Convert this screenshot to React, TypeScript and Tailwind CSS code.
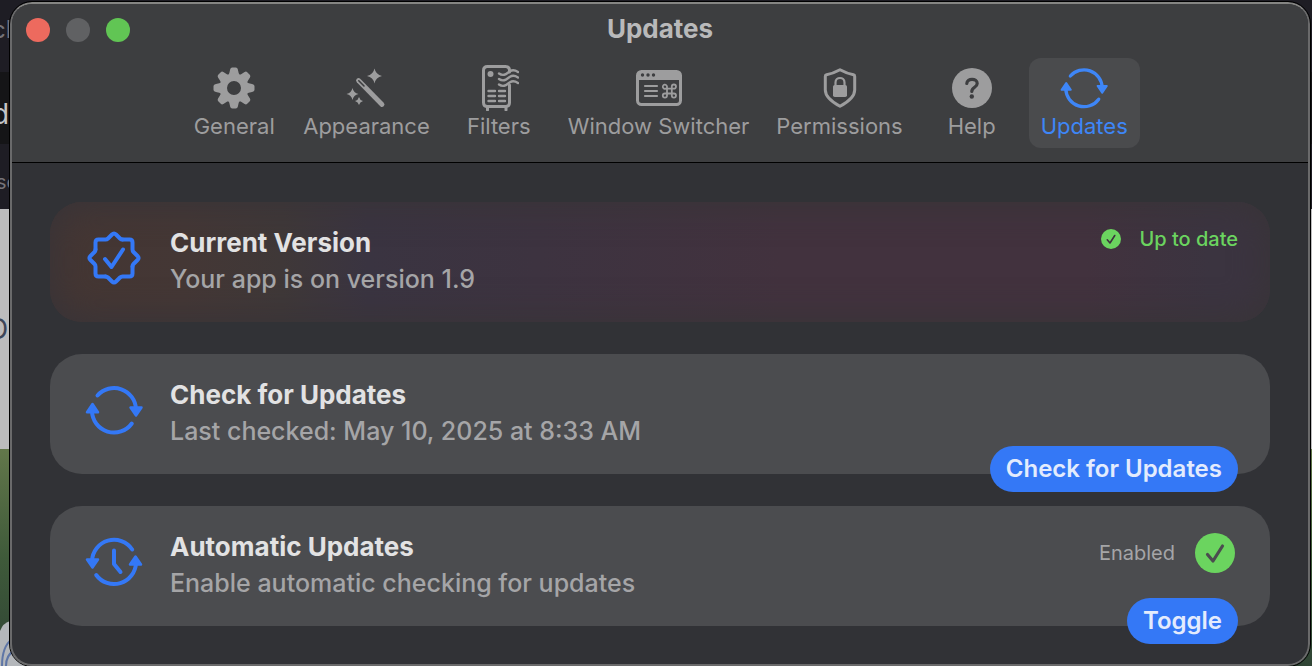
import React, { useState } from 'react';

type TabId =
  | 'general'
  | 'appearance'
  | 'filters'
  | 'switcher'
  | 'permissions'
  | 'help'
  | 'updates';

interface CardProps {
  icon: React.ReactNode;
  title: string;
  subtitle: string;
  className: string;
  children?: React.ReactNode;
}

const GearIcon: React.FC = () => (
  <svg width="42" height="42" viewBox="-21 -21 42 42" fill="currentColor">
    {[0, 45, 90, 135, 180, 225, 270, 315].map(angle => (
      <path
        key={angle}
        transform={`rotate(${angle})`}
        d="M-5.5 -13 Q-4.600 -14.500 -4.200 -17 L-3.800 -18.800 Q-3.400 -20.500 -1.8 -20.500 H1.8 Q3.400 -20.500 3.800 -18.800 L4.200 -17 Q4.600 -14.500 5.5 -13 Z"
      />
    ))}
    <circle r="10.700" fill="none" stroke="currentColor" strokeWidth="7.400" />
  </svg>
);

const WandIcon: React.FC = () => (
  <svg width="42" height="42" viewBox="0 0 42 42" fill="currentColor">
    <path d="M13.5 13.5 L37 37.5" stroke="currentColor" strokeWidth="4.800" strokeLinecap="round" />
    <path d="M13.8 13.8 L19 19" stroke="#3d3e40" strokeWidth="1.600" strokeLinecap="round" />
    <path d="M29.5 1.500 Q30.800 7.700 37 9 Q30.800 10.300 29.500 16.500 Q28.200 10.300 22 9 Q28.200 7.700 29.500 1.500 Z" />
    <path d="M7.500 21 Q8.600 25.900 13.500 27 Q8.600 28.100 7.500 33 Q6.400 28.100 1.500 27 Q6.400 25.900 7.500 21 Z" />
    <path d="M14 30 Q14.800 33.200 18 34 Q14.800 34.800 14 38 Q13.200 34.800 10 34 Q13.200 33.200 14 30 Z" />
  </svg>
);

const FiltersIcon: React.FC = () => (
  <svg width="40" height="46" viewBox="0 0 40 46" fill="none" stroke="currentColor" strokeLinecap="round">
    <path d="M30.500 7 V5.500 Q30.500 1.500 26.500 1.500 H8.500 Q4.500 1.500 4.500 5.500 V37.500 Q4.500 41.500 8.500 41.500 H26.500 Q30.500 41.500 30.500 37.500 V20" strokeWidth="3" />
    <path d="M8.500 42 V45 M27 42 V45" strokeWidth="3" />
    <circle cx="11.500" cy="9" r="3" fill="currentColor" stroke="none" />
    <g strokeWidth="2.400">
      <path d="M9.500 26 H16 M20 26 H26 M9.500 31 H16 M20 31 H26 M9.500 36 H16 M20 36 H26" />
      <path d="M20 8.500 C25 12 28 8 31 6.200 S36 5 39 7" />
      <path d="M20 14 C25 17.500 28 13.500 31 11.700 S36 10.500 39 12.500" />
      <path d="M20 19.500 C25 23 28 19 31 17.200 S36 16 39 18" />
    </g>
  </svg>
);

const SwitcherIcon: React.FC = () => (
  <svg width="46" height="36" viewBox="0 0 46 36" fill="none" stroke="currentColor">
    <rect x="1.500" y="1.500" width="43" height="33" rx="4" strokeWidth="3" />
    <path d="M2 4 Q2 2 4 2 H42 Q44 2 44 4 V10 H2 Z" fill="currentColor" stroke="none" />
    <g fill="#3d3e40" stroke="none">
      <circle cx="6.500" cy="5" r="1.700" />
      <circle cx="12" cy="5" r="1.700" />
      <circle cx="17.500" cy="5" r="1.700" />
    </g>
    <path d="M9 16 H21 M9 21 H21 M9 26 H21" strokeWidth="2.200" strokeLinecap="round" />
    <path
      d="M31 18.700 H35.800 V23.500 H31 Z M31 18.700 H29.700 A2.100 2.100 0 1 1 31 16.600 Z M35.800 18.700 V16.600 A2.100 2.100 0 1 1 37.900 18.700 Z M35.800 23.500 H37.900 A2.100 2.100 0 1 1 35.800 25.600 Z M31 23.500 V25.600 A2.100 2.100 0 1 1 28.900 23.500 Z"
      strokeWidth="1.800"
    />
  </svg>
);

const ShieldIcon: React.FC = () => (
  <svg width="34" height="40" viewBox="0 0 34 40" fill="none" stroke="currentColor" strokeLinejoin="round">
    <path d="M17 1.700 Q24 5.500 30.500 6.700 Q31.700 7 31.700 8.500 V22 C31.700 29 25 34 17 38.300 C9 34 2.300 29 2.300 22 V8.500 Q2.300 7 3.500 6.700 Q10 5.500 17 1.700 Z" strokeWidth="3" />
    <rect x="10" y="17" width="14" height="12" rx="1.800" fill="currentColor" stroke="none" />
    <path d="M12.500 18 V14.500 C12.500 8.500 21.500 8.500 21.500 14.500 V18" strokeWidth="2.200" />
  </svg>
);

const HelpIcon: React.FC = () => (
  <svg width="40" height="40" viewBox="0 0 40 40">
    <circle cx="20" cy="20" r="20" fill="currentColor" />
    <path d="M14.800 15.500 C15 10 25.200 9.800 25.200 15.500 C25.200 19.500 19.800 19 19.800 23.500" fill="none" stroke="#3d3e40" strokeWidth="3.200" strokeLinecap="round" />
    <circle cx="19.800" cy="28.500" r="2.200" fill="#3d3e40" />
  </svg>
);

const SyncIcon: React.FC<{ className: string }> = ({ className }) => (
  <svg className={`overflow-visible ${className}`} viewBox="-29 -24 58 48" fill="none" stroke="currentColor" strokeLinecap="round" strokeLinejoin="round">
    <path d="M-16.500 -14.500 A22 22 0 0 1 22 -1" strokeWidth="4" />
    <path d="M17.800 13.500 A22 22 0 0 1 -22 1" strokeWidth="4" />
    <path d="M16.500 -2.500 H27.500 L22 5.500 Z" fill="currentColor" strokeWidth="2.500" />
    <path d="M-27 2.200 H-16 L-21.500 -6 Z" fill="currentColor" strokeWidth="2.500" />
  </svg>
);

const AutoUpdateIcon: React.FC = () => (
  <svg className="h-12 w-[58px] overflow-visible" viewBox="-29 -24 58 48" fill="none" stroke="currentColor" strokeLinecap="round" strokeLinejoin="round">
    <path d="M18.200 -12.500 A22 22 0 0 0 -22 -1" strokeWidth="4" />
    <path d="M-17.800 13 A22 22 0 0 0 22 1" strokeWidth="4" />
    <path d="M-27 -2.500 H-16 L-21.500 5.500 Z" fill="currentColor" strokeWidth="2.500" />
    <path d="M16 2.500 H27 L21.500 -5.500 Z" fill="currentColor" strokeWidth="2.500" />
    <path d="M0 -11.500 V2 L6.500 10" strokeWidth="4" />
  </svg>
);

const SealIcon: React.FC = () => (
  <svg width="56" height="56" viewBox="-28 -28 56 56" fill="none" stroke="currentColor" strokeWidth="4" strokeLinecap="round" strokeLinejoin="round">
    {[0, 90, 180, 270].map(angle => (
      <path
        key={angle}
        transform={`rotate(${angle})`}
        d="M-18.500 -8.500 V-15.500 Q-18.500 -18.500 -15.500 -18.500 H-8.500 Q-7 -18.500 -6 -19.500 L-2 -23.500 Q0 -25.500 2 -23.500 L6 -19.500 Q7 -18.500 8.500 -18.500"
      />
    ))}
    <path d="M-9 1 L-2.500 9 L9 -8.500" />
  </svg>
);

const CheckBadge: React.FC<{ className: string; mark: string }> = ({ className, mark }) => (
  <svg className={className} viewBox="0 0 40 40">
    <circle cx="20" cy="20" r="20" fill="#6bd45f" />
    <path d="M12.500 21.500 L18 28 L27.500 13" fill="none" stroke={mark} strokeWidth="3.200" strokeLinecap="round" strokeLinejoin="round" />
  </svg>
);

const tabs: { id: TabId; label: string; icon: React.ReactNode }[] = [
  { id: 'general', label: 'General', icon: <GearIcon /> },
  { id: 'appearance', label: 'Appearance', icon: <WandIcon /> },
  { id: 'filters', label: 'Filters', icon: <FiltersIcon /> },
  { id: 'switcher', label: 'Window Switcher', icon: <SwitcherIcon /> },
  { id: 'permissions', label: 'Permissions', icon: <ShieldIcon /> },
  { id: 'help', label: 'Help', icon: <HelpIcon /> },
  { id: 'updates', label: 'Updates', icon: <SyncIcon className="h-10 w-12" /> }
];

const Card: React.FC<CardProps> = ({ icon, title, subtitle, className, children }) => (
  <section className={`relative flex h-[120px] items-start gap-6 rounded-[32px] px-8 pt-[23px] ${className}`}>
    <div className="flex h-[66px] w-16 shrink-0 items-center justify-center text-[#3478f6]">
      {icon}
    </div>
    <div className="grow">
      <h2 className="text-[26px] font-bold leading-9 text-[#e2e2e3]">{title}</h2>
      <p className="text-[25px] font-medium leading-9 text-[#a5a5a7]">{subtitle}</p>
    </div>
    {children}
  </section>
);

const PillButton: React.FC<{ label: string; onClick?: () => void }> = ({ label, onClick }) => (
  <button
    onClick={onClick}
    className="absolute -bottom-[18px] right-8 h-[46px] rounded-full bg-[#3478f6] px-4 text-2xl font-semibold text-[#e3ebfd]"
  >
    {label}
  </button>
);

// Slivers of the windows sitting behind the settings window
const Backdrop: React.FC = () => (
  <div aria-hidden="true" className="absolute inset-0 flex flex-col overflow-hidden leading-8">
    <div className="h-[209px] shrink-0 bg-[#1e1d24]">
      <div className="h-[72px] pt-3 text-2xl leading-9 text-[#75747a]"><span className="-ml-2">cl</span></div>
      <div className="h-[72px] bg-[#151517] pt-6 text-[28px] leading-9 text-[#c4c4c6]"><span className="-ml-2">d</span></div>
      <div className="pt-6 text-xl leading-7 text-[#75747a]"><span className="-ml-1">se</span></div>
    </div>
    <div className="h-60 shrink-0 bg-[#bcbcbd] pt-[104px] text-[28px] text-[#3c4659]"><span className="-ml-3">D</span></div>
    <div className="grow bg-linear-to-b from-[#62774a] via-[#3f5a3a] to-[#2f4434]">
      <svg width="40" height="217" viewBox="0 0 40 217" fill="none">
        <path d="M0 217 V182 Q3 174 10 172 L40 200 V217 Z" fill="#b4b7bb" />
        <path d="M2 217 C2 205 4 196 12 190 M6 217 C6 210 8 205 14 202" stroke="#5f76a6" strokeWidth="2" />
      </svg>
    </div>
  </div>
);

export default function App() {
  const [activeTab, setActiveTab] = useState<TabId>('updates');

  return (
    <div className="relative flex min-h-screen flex-col bg-black pl-[10px] pr-[2px] pt-[2px] font-['Inter','Liberation_Sans',sans-serif]">
      <Backdrop />

      <div className="relative flex grow flex-col overflow-hidden rounded-[22px] border-2 border-[#6a6a6b] border-t-[#858583] bg-[#313236] outline outline-black">
        {/* Title bar and tabs */}
        <header className="border-b border-black bg-[#3d3e40]">
          <div className="grid h-[52px] grid-cols-[1fr_auto_1fr] items-center px-[14px]">
            <div className="flex gap-4">
              <button aria-label="Close" className="h-6 w-6 rounded-full bg-[#ed6a5e]" />
              <button aria-label="Minimize" className="h-6 w-6 rounded-full bg-[#606163]" />
              <button aria-label="Zoom" className="h-6 w-6 rounded-full bg-[#61c554]" />
            </div>
            <h1 className="pb-[2px] text-[26px] font-bold leading-8 text-[#b9b9ba]">Updates</h1>
          </div>

          <nav className="flex justify-center gap-[3px] pb-[14px] pt-[2px]">
            {tabs.map(tab => (
              <button
                key={tab.id}
                onClick={() => setActiveTab(tab.id)}
                className={`flex h-[90px] min-w-[108px] flex-col items-center whitespace-nowrap rounded-xl px-3 pt-[7px] ${
                  activeTab === tab.id ? 'bg-[#4a4b4d] text-[#3e86f7]' : 'text-[#9d9d9e]'
                }`}
              >
                <span className="flex h-[46px] items-center justify-center">{tab.icon}</span>
                <span className="text-[22px] leading-[30px]">{tab.label}</span>
              </button>
            ))}
          </nav>
        </header>

        <main className="flex flex-col gap-8 px-[38px] pb-[38px] pt-[39px]">
          <Card
            icon={<SealIcon />}
            title="Current Version"
            subtitle="Your app is on version 1.9"
            className="bg-[linear-gradient(90deg,#443633_0%,#443735_11%,#3f3838_19%,#3a3441_26%,#3d3340_40%,#42323e_60%,#42323e_85%,#3b3440_95%)] shadow-[inset_0_0_32px_6px_#393438]"
          >
            <div className="flex items-center gap-[18px] text-[#6bd45f]">
              <CheckBadge className="h-5 w-5" mark="#3d333e" />
              <span className="text-xl font-medium leading-7">Up to date</span>
            </div>
          </Card>

          <Card
            icon={<SyncIcon className="h-12 w-[58px]" />}
            title="Check for Updates"
            subtitle="Last checked: May 10, 2025 at 8:33 AM"
            className="bg-[#4b4c4f]"
          >
            <PillButton label="Check for Updates" />
          </Card>

          <Card
            icon={<AutoUpdateIcon />}
            title="Automatic Updates"
            subtitle="Enable automatic checking for updates"
            className="bg-[#4b4c4f]"
          >
            <div className="flex items-center gap-5 pr-[3px] pt-1">
              <span className="text-xl leading-7 text-[#a5a5a7]">Enabled</span>
              <CheckBadge className="h-10 w-10" mark="#4b4c4f" />
            </div>
            <PillButton label="Toggle" />
          </Card>
        </main>
      </div>
    </div>
  );
}
